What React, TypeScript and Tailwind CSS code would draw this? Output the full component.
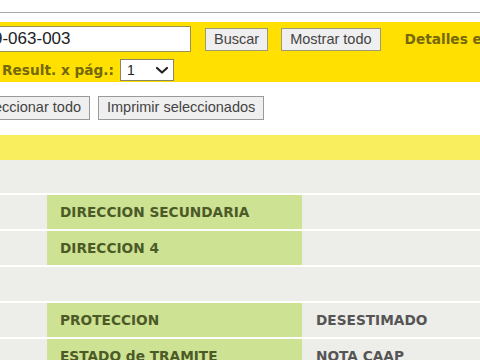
export default function App() {
  const rows = [
    { label: "DIRECCION SECUNDARIA", value: "" },
    { label: "DIRECCION 4", value: "" },
    { label: "", value: "", empty: true },
    { label: "PROTECCION", value: "DESESTIMADO" },
    { label: "ESTADO de TRAMITE", value: "NOTA CAAP" },
  ];

  return (
    <div className="w-[480px] h-[360px] overflow-hidden bg-white font-['DejaVu_Sans',Verdana,sans-serif]">
      {/* top rule */}
      <div className="h-[13px] border-b border-[#a8a8a8]" />
      <div className="h-[9px]" />

      {/* search band */}
      <div className="h-[60px] bg-[#ffe000] pt-[4px]">
        <div className="flex items-center">
          <div className="shrink-0 -ml-[12px] w-[203px] h-[26px] bg-white border border-[#9c9256] flex items-center pl-[4px] font-['Liberation_Sans',Arial,sans-serif] text-[17px] text-[#222]">
            9-063-003
          </div>
          <button className="shrink-0 whitespace-nowrap ml-[14px] h-[23px] px-[8px] bg-[#efefef] border border-[#a09a70] font-['Liberation_Sans',Arial,sans-serif] text-[14.5px] text-[#444]">
            Buscar
          </button>
          <button className="shrink-0 whitespace-nowrap ml-[13px] h-[23px] px-[8px] bg-[#efefef] border border-[#a09a70] font-['Liberation_Sans',Arial,sans-serif] text-[14.5px] text-[#444]">
            Mostrar todo
          </button>
          <span className="shrink-0 ml-[24px] whitespace-nowrap font-bold text-[13.7px] text-[#74680a]">
            Detalles e
          </span>
        </div>
        <div className="flex items-center mt-[7px]">
          <span className="shrink-0 ml-[2px] whitespace-nowrap font-bold text-[13.7px] text-[#74680a]">
            Result. x pág.:
          </span>
          <div className="shrink-0 ml-[6px] w-[54px] h-[22px] bg-white border border-[#8c8660] flex items-center justify-between pl-[6px] pr-[4px] font-['Liberation_Sans',Arial,sans-serif] text-[14px] text-[#222]">
            <span>1</span>
            <svg width="14" height="10" viewBox="0 0 14 10" fill="none" stroke="#222" strokeWidth="2.2" strokeLinecap="round" strokeLinejoin="round">
              <path d="M2 3l5 4.5L12 3" />
            </svg>
          </div>
        </div>
      </div>

      {/* action buttons */}
      <div className="h-[53px] pt-[14px] flex items-start">
        <button className="shrink-0 -ml-[36px] h-[24px] px-[8px] bg-[#efefef] border border-[#9a9a9a] font-['Liberation_Sans',Arial,sans-serif] text-[14.5px] text-[#444] whitespace-nowrap">
          Seleccionar todo
        </button>
        <button className="shrink-0 ml-[8px] h-[24px] px-[8px] bg-[#efefef] border border-[#9a9a9a] font-['Liberation_Sans',Arial,sans-serif] text-[14.5px] text-[#444] whitespace-nowrap">
          Imprimir seleccionados
        </button>
      </div>

      {/* light yellow band */}
      <div className="h-[25px] bg-[#f8ee5e]" />

      {/* detail table */}
      <div className="bg-[#ededea] h-[200px] pt-[33px]">
        {rows.map((r, i) => (
          <div key={i} className="flex h-[36px] border-t-2 border-white">
            <div className="w-[45px] mr-[2px]" />
            <div
              className={`w-[255px] flex items-center pl-[13px] font-bold text-[13.7px] text-[#4c5a28] ${
                r.empty ? "" : "bg-[#cde292]"
              }`}
            >
              {r.label}
            </div>
            <div className="flex-1 flex items-center pl-[14px] font-bold text-[13.7px] text-[#555]">
              {r.value}
            </div>
          </div>
        ))}
      </div>
    </div>
  );
}
